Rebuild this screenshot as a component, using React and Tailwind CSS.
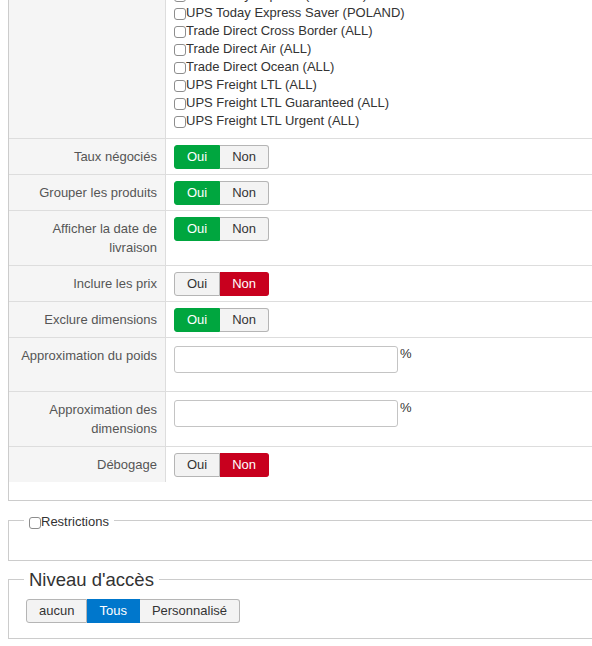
import { useState } from "react";
import clsx from "clsx";

const services = [
  "UPS Today Express (POLAND)",
  "UPS Today Express Saver (POLAND)",
  "Trade Direct Cross Border (ALL)",
  "Trade Direct Air (ALL)",
  "Trade Direct Ocean (ALL)",
  "UPS Freight LTL (ALL)",
  "UPS Freight LTL Guaranteed (ALL)",
  "UPS Freight LTL Urgent (ALL)",
];

function Check({ className }) {
  return (
    <input
      type="checkbox"
      className={clsx(
        "appearance-none shrink-0 w-[12px] h-[12px] m-0 border border-[#8d8d8d] rounded-[3px] bg-white",
        className
      )}
    />
  );
}

function Toggle({ initial }) {
  const [on, setOn] = useState(initial);
  return (
    <div className="inline-flex h-[24px] text-[13px]">
      <button
        onClick={() => setOn(true)}
        className={clsx(
          "px-3 border rounded-l-[3px] leading-[22px]",
          on
            ? "bg-[#00a63f] border-[#00a63f] text-white"
            : "bg-[#f3f3f3] border-[#b5b5b5] text-[#333]"
        )}
      >
        Oui
      </button>
      <button
        onClick={() => setOn(false)}
        className={clsx(
          "px-3 border border-l-0 rounded-r-[3px] leading-[22px]",
          !on
            ? "bg-[#c8001e] border-[#c8001e] text-white"
            : "bg-[#f3f3f3] border-[#b5b5b5] text-[#333]"
        )}
      >
        Non
      </button>
    </div>
  );
}

function Row({ label, children }) {
  return (
    <div className="flex">
      <div className="w-[157px] shrink-0 bg-[#f5f5f5] border-r border-[#ddd] px-2 py-2 text-right leading-[19px] text-[#555]">
        {label}
      </div>
      <div className="flex-1 pl-2">{children}</div>
    </div>
  );
}

function Percent() {
  return (
    <div className="flex items-start pt-2 pb-[18px]">
      <input
        type="text"
        className="w-[224px] h-[27px] border border-[#c4c4c4] rounded-[3px] bg-white"
      />
      <span className="ml-[2px] leading-[16px] text-[#333]">%</span>
    </div>
  );
}

export default function App() {
  const [access, setAccess] = useState("Tous");

  return (
    <div className="w-[592px] h-[646px] overflow-hidden bg-white font-['Liberation_Sans',Arial,sans-serif] text-[13px] text-[#333]">
      <div className="w-[640px] -mt-[22px]">
        {/* Options table */}
        <div className="ml-2 border-l border-b border-[#ccc] pb-[18px]">
          <div className="divide-y divide-[#ddd]">
            <Row label="">
              <div className="py-2">
                {services.map((s) => (
                  <label key={s} className="flex items-center h-[18px] leading-[18px]">
                    <Check className="translate-y-[1px]" />
                    <span>{s}</span>
                  </label>
                ))}
              </div>
            </Row>
            <Row label="Taux négociés">
              <div className="pt-[6px]">
                <Toggle initial={true} />
              </div>
            </Row>
            <Row label="Grouper les produits">
              <div className="pt-[6px]">
                <Toggle initial={true} />
              </div>
            </Row>
            <Row label={<>Afficher la date de<br />livraison</>}>
              <div className="pt-[6px]">
                <Toggle initial={true} />
              </div>
            </Row>
            <Row label="Inclure les prix">
              <div className="pt-[6px]">
                <Toggle initial={false} />
              </div>
            </Row>
            <Row label="Exclure dimensions">
              <div className="pt-[6px]">
                <Toggle initial={true} />
              </div>
            </Row>
            <Row label="Approximation du poids">
              <Percent />
            </Row>
            <Row label={<>Approximation des<br />dimensions</>}>
              <Percent />
            </Row>
            <Row label="Débogage">
              <div className="pt-[6px]">
                <Toggle initial={false} />
              </div>
            </Row>
          </div>
        </div>

        {/* Restrictions */}
        <fieldset className="ml-2 mt-[10px] border border-[#ccc] pl-[15px] h-[50px]">
          <legend className="flex items-center px-[5px] leading-[18px]">
            <Check className="translate-y-[3px]" />
            <span className="translate-y-[2px]">Restrictions</span>
          </legend>
        </fieldset>

        {/* Access level */}
        <fieldset className="ml-2 mt-[7px] border border-[#ccc] pl-[15px] pb-[15px]">
          <legend className="px-[5px] text-[18.5px] leading-[23px] text-[#333]">
            Niveau d'accès
          </legend>
          <div className="inline-flex h-[24px] ml-[2px] mt-[8px]">
            {["aucun", "Tous", "Personnalisé"].map((o, i) => (
              <button
                key={o}
                onClick={() => setAccess(o)}
                className={clsx(
                  "px-3 border leading-[22px]",
                  i === 0 && "rounded-l-[3px]",
                  i === 2 && "rounded-r-[3px]",
                  i > 0 && "border-l-0",
                  access === o
                    ? "bg-[#0077cc] border-[#0077cc] text-white"
                    : "bg-[#f3f3f3] border-[#b5b5b5] text-[#333]"
                )}
              >
                {o}
              </button>
            ))}
          </div>
        </fieldset>
      </div>
    </div>
  );
}
